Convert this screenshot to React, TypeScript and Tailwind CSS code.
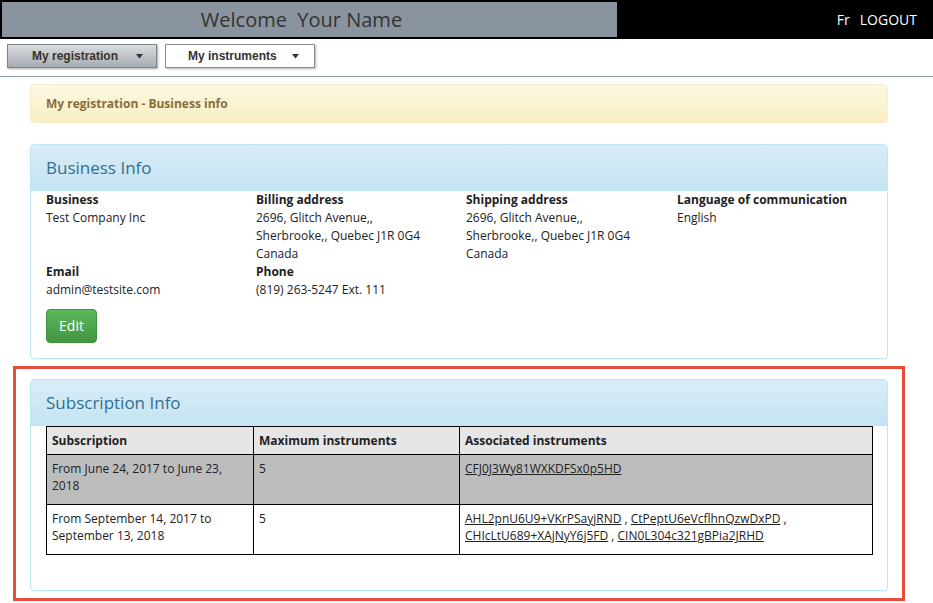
import React from "react";

const Caret = () => (
  <svg width="7" height="5" viewBox="0 0 7 5" className="inline-block">
    <path d="M0 0 L7 0 L3.5 4.5 Z" fill="#333" />
  </svg>
);

export default function App() {
  const font = { fontFamily: '"Open Sans", "Noto Sans", sans-serif' };
  return (
    <div className="w-[933px] h-[603px] bg-white overflow-hidden" style={font}>
      {/* top bar */}
      <div className="h-[39px] bg-black flex items-start pt-[2px] pl-[2px]">
        <div className="w-[615px] h-[35px] bg-[#8a949e] flex items-center justify-center text-[20px] text-[#333] pr-[16px]">
          Welcome&nbsp; Your Name
        </div>
        <div className="flex-1 flex justify-end items-center h-[35px] pr-[16px] text-white text-[14px] gap-[10px]">
          <span>Fr</span>
          <span>LOGOUT</span>
        </div>
      </div>
      {/* nav */}
      <div className="flex gap-[8px] pl-[7px] pt-[5px] h-[38px] border-b border-[#8a9aa6]" style={{ fontFamily: '"Liberation Sans", Arial, sans-serif' }}>
        <button className="w-[150px] h-[24px] border border-[#7d858c] bg-gradient-to-b from-[#d9dde0] to-[#a6adb3] shadow-[1px_1px_2px_rgba(0,0,0,0.35)] text-[12px] font-bold text-[#3a3328] flex items-center pl-[24px] gap-[18px]">
          <span>My registration</span>
          <Caret />
        </button>
        <button className="w-[150px] h-[24px] border border-[#8c8c8c] bg-white shadow-[1px_1px_2px_rgba(0,0,0,0.3)] text-[12px] font-bold text-[#333] flex items-center pl-[22px] gap-[15px]">
          <span>My instruments</span>
          <Caret />
        </button>
      </div>
      <div className="ml-[30px] w-[858px] pt-[7px]">
        {/* alert */}
        <div className="h-[39px] rounded-[4px] border border-[#faebcc] bg-gradient-to-b from-[#fcf8e3] to-[#f8efc0] flex items-center px-[15px] text-[12px] font-bold text-[#8a6d3b]">
          My registration - Business info
        </div>
        {/* business panel */}
        <div className="mt-[21px] rounded-[4px] border border-[#bce8f1] shadow-[0_1px_1px_rgba(0,0,0,0.05)]">
          <div className="h-[46px] bg-gradient-to-b from-[#d9edf7] to-[#c4e3f3] flex items-center px-[15px] text-[17px] text-[#31708f] rounded-t-[3px] border-b border-[#bce8f1]">
            Business Info
          </div>
          <div className="px-[15px] pb-[15px] text-[12px] leading-[18px] text-[#222]">
            <div className="grid grid-cols-[210px_210px_211px_1fr]">
              <div>
                <div className="font-bold">Business</div>
                <div>Test Company Inc</div>
              </div>
              <div>
                <div className="font-bold">Billing address</div>
                <div>2696, Glitch Avenue,,</div>
                <div>Sherbrooke,, Quebec J1R 0G4</div>
                <div>Canada</div>
              </div>
              <div>
                <div className="font-bold">Shipping address</div>
                <div>2696, Glitch Avenue,,</div>
                <div>Sherbrooke,, Quebec J1R 0G4</div>
                <div>Canada</div>
              </div>
              <div>
                <div className="font-bold">Language of communication</div>
                <div>English</div>
              </div>
            </div>
            <div className="grid grid-cols-[210px_210px_211px_1fr]">
              <div>
                <div className="font-bold">Email</div>
                <div>admin@testsite.com</div>
              </div>
              <div>
                <div className="font-bold">Phone</div>
                <div>(819) 263-5247 Ext. 111</div>
              </div>
            </div>
            <button className="mt-[10px] w-[51px] h-[34px] rounded-[4px] border border-[#3e8f3e] bg-gradient-to-b from-[#5cb85c] to-[#419641] text-white text-[14px] flex items-center justify-center">
              Edit
            </button>
          </div>
        </div>
        {/* subscription panel with annotation outline */}
        <div className="-mx-[17px] mt-[7px] border-[3px] border-[#e74c3c] px-[14px] pt-[10px] pb-[7px]">
          <div className="rounded-[4px] border border-[#bce8f1] shadow-[0_1px_1px_rgba(0,0,0,0.05)]">
            <div className="h-[46px] bg-gradient-to-b from-[#d9edf7] to-[#c4e3f3] flex items-center px-[15px] text-[17px] text-[#31708f] rounded-t-[3px]">
              Subscription Info
            </div>
            <div className="px-[15px] pb-[35px]">
              <table className="w-[827px] border-collapse border border-black text-[12px] text-[#222] table-fixed">
                <colgroup>
                  <col className="w-[207px]" />
                  <col className="w-[206px]" />
                  <col />
                </colgroup>
                <thead>
                  <tr className="bg-[#e6e6e6] h-[28px]">
                    <th className="border border-black text-left font-bold px-[5px] align-middle">Subscription</th>
                    <th className="border border-black text-left font-bold px-[5px] align-middle">Maximum instruments</th>
                    <th className="border border-black text-left font-bold px-[5px] align-middle">Associated instruments</th>
                  </tr>
                </thead>
                <tbody className="leading-[17px]">
                  <tr className="bg-[#bdbdbd] h-[50px]">
                    <td className="border border-black px-[5px] pt-[5px] pb-[8px] align-top">From June 24, 2017 to June 23, 2018</td>
                    <td className="border border-black px-[5px] pt-[5px] pb-[8px] align-top">5</td>
                    <td className="border border-black px-[5px] pt-[5px] pb-[8px] align-top">
                      <a className="underline text-[#222]">CFJ0J3Wy81WXKDFSx0p5HD</a>
                    </td>
                  </tr>
                  <tr className="bg-white h-[50px]">
                    <td className="border border-black px-[5px] pt-[5px] pb-[8px] align-top">From September 14, 2017 to September 13, 2018</td>
                    <td className="border border-black px-[5px] pt-[5px] pb-[8px] align-top">5</td>
                    <td className="border border-black px-[5px] pt-[5px] pb-[8px] align-top">
                      <a className="underline text-[#222]">AHL2pnU6U9+VKrPSayjRND</a> , <a className="underline text-[#222]">CtPeptU6eVcflhnQzwDxPD</a> ,{" "}
                      <a className="underline text-[#222]">CHIcLtU689+XAjNyY6j5FD</a> , <a className="underline text-[#222]">CIN0L304c321gBPia2JRHD</a>
                    </td>
                  </tr>
                </tbody>
              </table>
            </div>
          </div>
        </div>
      </div>
    </div>
  );
}
